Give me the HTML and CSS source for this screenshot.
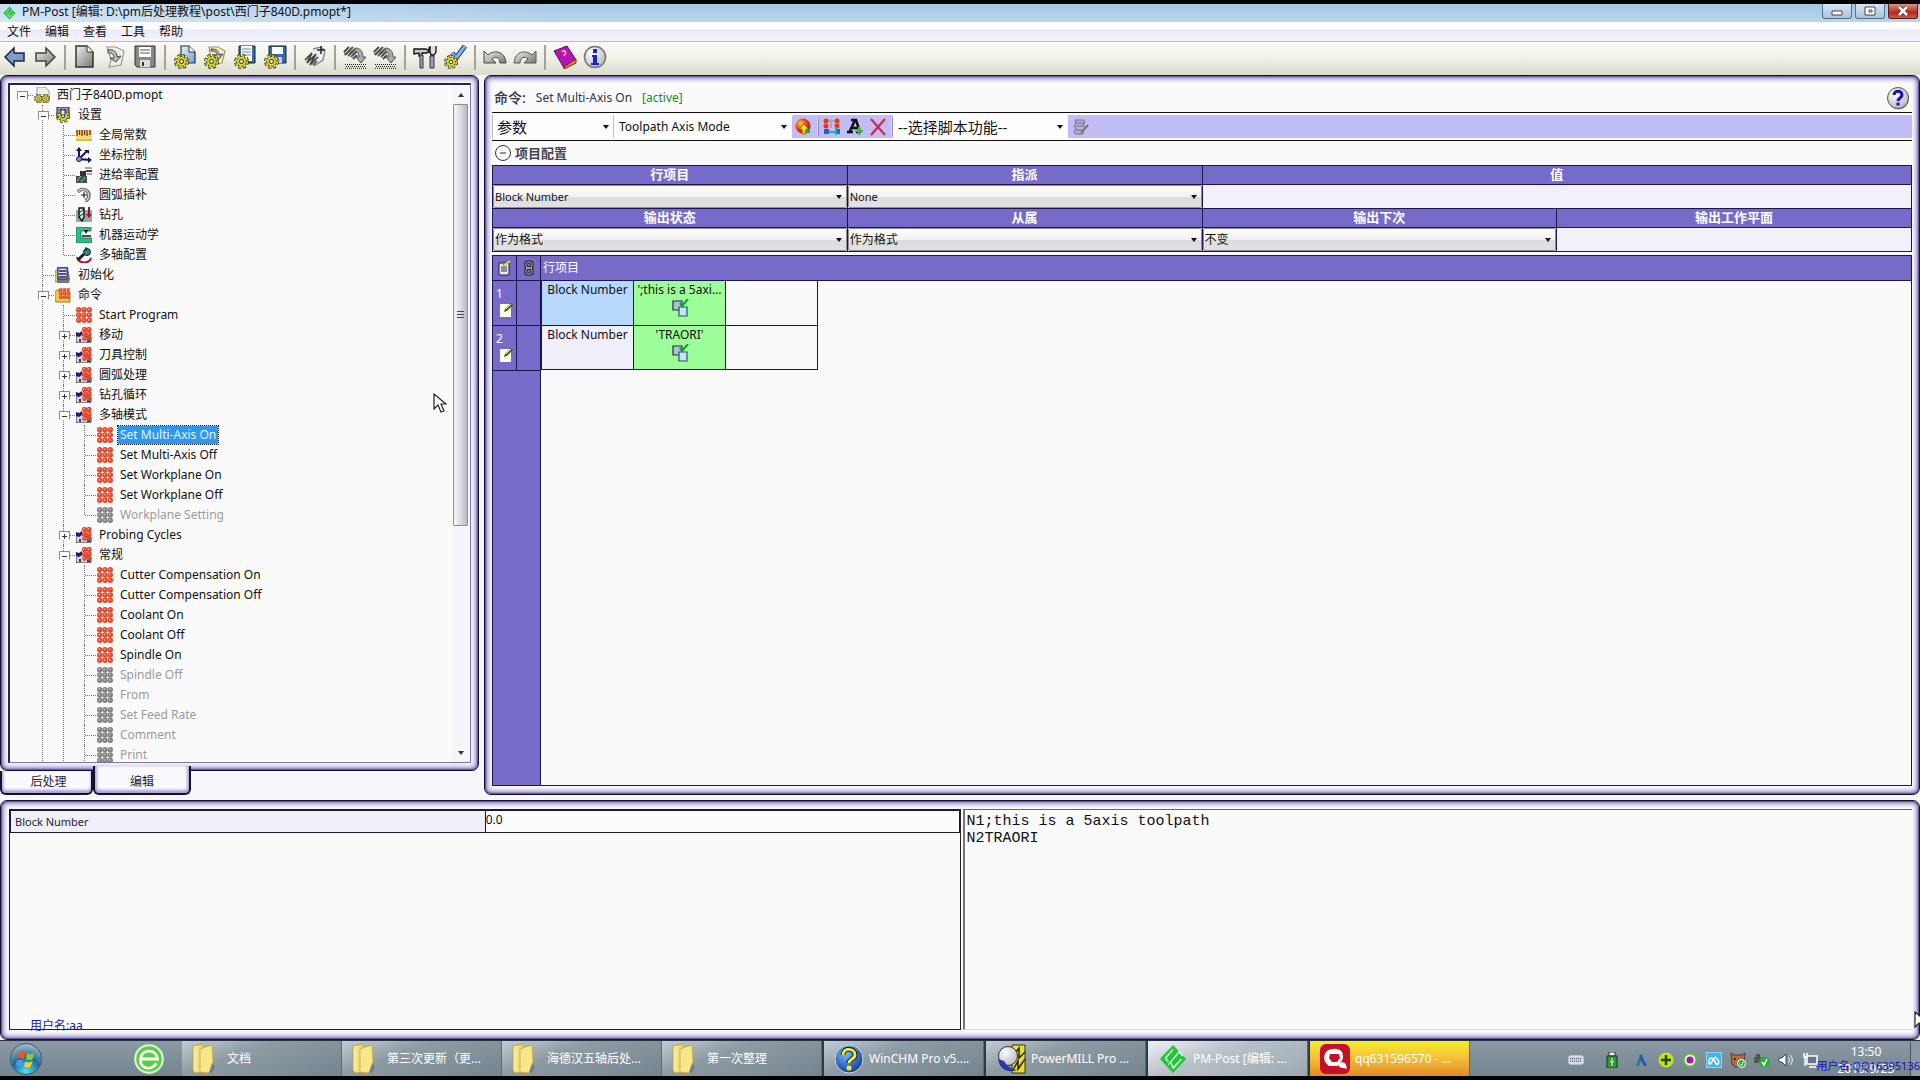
FILE: index.html
```html
<!DOCTYPE html>
<html lang="zh-CN">
<head>
    <meta charset="UTF-8">
    <meta name="viewport" content="width=device-width, initial-scale=1.0">
    <title>PM-Post</title>
    <link rel="stylesheet" href="styles.css">
</head>
<body>
    <!-- shared icons -->
    <svg class="sprite" aria-hidden="true">
        <defs>
            <linearGradient id="gGrey" x1="0" y1="0" x2="1" y2="1"><stop offset="0" stop-color="#f0f0f0"/><stop offset="1" stop-color="#777"/></linearGradient>
            <linearGradient id="gBlue" x1="0" y1="0" x2="1" y2="1"><stop offset="0" stop-color="#e8f4ff"/><stop offset="1" stop-color="#6d9cd0"/></linearGradient>
            <linearGradient id="gFolder" x1="0" y1="0" x2="1" y2="0"><stop offset="0" stop-color="#fdf3a0"/><stop offset="1" stop-color="#dcc458"/></linearGradient>
            <radialGradient id="gOrb" cx=".5" cy=".9" r=".9"><stop offset="0" stop-color="#4fe0f0"/><stop offset=".5" stop-color="#1c6a9c"/><stop offset="1" stop-color="#a8c0d0"/></radialGradient>
            <radialGradient id="gRed" cx=".35" cy=".35" r=".7"><stop offset="0" stop-color="#ffd040"/><stop offset=".5" stop-color="#f04818"/><stop offset="1" stop-color="#b01008"/></radialGradient>
            <radialGradient id="gBall" cx=".35" cy=".3" r=".8"><stop offset="0" stop-color="#fff"/><stop offset="1" stop-color="#b4b4bc"/></radialGradient>
            <radialGradient id="gHelp" cx=".4" cy=".3" r=".8"><stop offset="0" stop-color="#6fc0ff"/><stop offset="1" stop-color="#0a2c90"/></radialGradient>
        </defs>
        <symbol id="gear" viewBox="0 0 14 14">
            <circle cx="7" cy="7" r="5.4" fill="none" stroke="#333508" stroke-width="3.2" stroke-dasharray="2.6 1.64"/>
            <circle cx="7" cy="7" r="5" fill="#333508"/>
            <circle cx="7" cy="7" r="5.2" fill="none" stroke="#d9d33c" stroke-width="2" stroke-dasharray="2 2.08"/>
            <circle cx="7" cy="7" r="4.2" fill="#d9d33c"/>
            <circle cx="7" cy="7" r="1.8" fill="#fff" stroke="#333508"/>
        </symbol>
        <symbol id="balls" viewBox="0 0 16 16">
            <g fill="currentColor"><circle cx="2.7" cy="2.7" r="2.7"/><circle cx="8" cy="2.7" r="2.7"/><circle cx="13.3" cy="2.7" r="2.7"/><circle cx="2.7" cy="8" r="2.7"/><circle cx="8" cy="8" r="2.7"/><circle cx="13.3" cy="8" r="2.7"/><circle cx="2.7" cy="13.3" r="2.7"/><circle cx="8" cy="13.3" r="2.7"/><circle cx="13.3" cy="13.3" r="2.7"/></g>
            <g fill="#fff" fill-opacity=".45"><circle cx="2.3" cy="2.3" r="1"/><circle cx="7.6" cy="2.3" r="1"/><circle cx="12.9" cy="2.3" r="1"/><circle cx="2.3" cy="7.6" r="1"/><circle cx="7.6" cy="7.6" r="1"/><circle cx="12.9" cy="7.6" r="1"/><circle cx="2.3" cy="12.9" r="1"/><circle cx="7.6" cy="12.9" r="1"/><circle cx="12.9" cy="12.9" r="1"/></g>
        </symbol>
        <symbol id="group" viewBox="0 0 16 16">
            <path d="M0 7h6l3 2 6 1v5l-2 1H1l-1-1z" fill="#d4d4e0" stroke="#333" stroke-width="1"/>
            <path d="M0 5l3 1 3-2v4L3 10 0 9z" fill="#1c1c70"/>
            <path d="M3 12h2v3H3zM11 13h3v2h-3z" fill="#444"/>
            <g fill="#e2472c"><circle cx="8.5" cy="2.5" r="2.6"/><circle cx="13" cy="2.5" r="2.6"/><circle cx="8.5" cy="7" r="2.6"/><circle cx="13" cy="7" r="2.6"/><circle cx="8.5" cy="11.5" r="2.4"/><circle cx="13" cy="11" r="2.4"/></g>
            <g fill="#ffb6a0"><circle cx="8" cy="2" r=".8"/><circle cx="12.5" cy="2" r=".8"/><circle cx="8" cy="6.5" r=".8"/><circle cx="12.5" cy="6.5" r=".8"/><circle cx="8" cy="11" r=".8"/></g>
        </symbol>
        <symbol id="folder" viewBox="0 0 24 32">
            <path d="M1 3l9-2 3 3v25l-9 1-3-2z" fill="url(#gFolder)" stroke="#b59b3a" stroke-width=".8"/>
            <path d="M8 6l12-4 1 17-4 11-9-1z" fill="#f7e78a" stroke="#c5aa45" stroke-width=".8"/>
            <path d="M17 30c4-1 6-3 6-6l-3-4z" fill="#57646d" opacity=".5"/>
        </symbol>
        <symbol id="edit" viewBox="0 0 14 16">
            <path d="M1 2h11v13H1z" fill="#fdfde8"/>
            <path d="M5 10l1-3 6-6 2 2-6 6z" fill="#54552a"/><path d="M7 7l5-5" stroke="#e8e890"/>
        </symbol>
        <symbol id="linked" viewBox="0 0 18 18">
            <path d="M2 2h9v9H2z" fill="#a8c4dc" stroke="#234" stroke-width="1.2"/>
            <path d="M8 8h8v9H8z" fill="#c8e4f4" stroke="#257" stroke-width="1.2"/>
            <path d="M9 4l2 3 6-7" fill="none" stroke="#169c26" stroke-width="2"/>
        </symbol>
        <symbol id="spring" viewBox="0 0 24 24">
            <path d="M1 7l5-5M2 10l8-8M5 11l7-7M8 12l6-6M10 14l4-4" fill="none" stroke="#444" stroke-width="1.8"/>
            <path d="M1 7l1 3M10 2l-5 9M12 4l-4 8" fill="none" stroke="#777"/>
            <path d="M12 3c5 0 8 3 8 9h3l-5 6-5-6h3c0-3-1-5-4-6z" fill="#aaa" stroke="#555"/>
            <path d="M2 19.500h21M3 21.500h20M2 23.300h21" stroke="#222" stroke-width="1" stroke-dasharray="1 1"/>
        </symbol>
        <symbol id="pmpost" viewBox="0 0 32 32">
            <path d="M16 1l14 15-14 15L2 16z" fill="#22c43c"/>
            <path d="M8 15l8-9M11 22l12-14M16 26l9-10M8 15l3 4M23 8l3 5M14 20l2 6" stroke="#dcf6de" stroke-width="1.6" fill="none"/>
        </symbol>
    </svg>

    <header class="titlebar">
        <svg class="app-icon"><use href="#pmpost"/></svg>
        <h1 class="title">PM-Post [编辑: D:\pm后处理教程\post\西门子840D.pmopt*]</h1>
        <div class="window-buttons">
            <button type="button" class="win-btn" aria-label="最小化"><svg viewBox="0 0 14 12"><path d="M2 6h10v4H2z" fill="#fff" stroke="#445" /></svg></button>
            <button type="button" class="win-btn" aria-label="最大化"><svg viewBox="0 0 14 12"><path d="M2 2h10v8H2zM6 5h3v2H6z" fill="#fff" stroke="#445"/></svg></button>
            <button type="button" class="win-btn win-close" aria-label="关闭"><svg viewBox="0 0 14 12"><path d="M3 2l8 8M11 2l-8 8" stroke="#533" stroke-width="4"/><path d="M3 2l8 8M11 2l-8 8" stroke="#fff" stroke-width="2.500"/></svg></button>
        </div>
    </header>

    <nav class="menubar">
        <button type="button">文件</button>
        <button type="button">编辑</button>
        <button type="button">查看</button>
        <button type="button">工具</button>
        <button type="button">帮助</button>
    </nav>

    <div class="toolbar" role="toolbar">
        <button type="button" aria-label="后退"><svg viewBox="0 0 24 24"><path d="M2 12l9-9v5h10v8H11v5z" fill="#7f9cc8" stroke="#1b2748" stroke-width="1.500"/></svg></button>
        <button type="button" aria-label="前进"><svg viewBox="0 0 24 24"><path d="M22 12l-9-9v5H3v8h10v5z" fill="url(#gGrey)" stroke="#444" stroke-width="1.500"/></svg></button>
        <span class="sep"></span>
        <button type="button" aria-label="新建"><svg viewBox="0 0 24 24"><path d="M3 1h11l6 6v15H3z" fill="url(#gGrey)" stroke="#333" stroke-width="1.500"/><path d="M14 1v6h6" fill="#fff" stroke="#333"/></svg></button>
        <button type="button" aria-label="打开"><svg viewBox="0 0 24 24"><path d="M4 2h9l8 4-3 14-12 2 2-7z" fill="#eee" stroke="#999" stroke-width="1.200"/><path d="M5 5c6-1 9 2 9 7l4-1-5 6-6-4h4c0-4-2-5-6-5z" fill="#bbb" stroke="#444"/></svg></button>
        <button type="button" aria-label="保存"><svg viewBox="0 0 24 24"><path d="M2 1h20v21H4l-2-2z" fill="#888" stroke="#333"/><path d="M6 2h12v10H6z" fill="#fff"/><path d="M7 5h10M7 8h10" stroke="#555"/><path d="M7 15h10v7H7z" fill="#ddd"/><path d="M9 17h2v4H9z" fill="#333"/></svg></button>
        <span class="sep"></span>
        <button type="button" aria-label="新建配置"><svg viewBox="0 0 24 24"><path d="M8 1h8l6 6v11H8z" fill="url(#gBlue)" stroke="#234" stroke-width="1.200"/><path d="M16 1v6h6" fill="#fff" stroke="#234"/><use href="#gear" x="1" y="9" width="15" height="15"/></svg></button>
        <button type="button" aria-label="打开配置"><svg viewBox="0 0 24 24"><path d="M6 2h9l7 4-3 12-10 1z" fill="#f3f0b0" stroke="#998" stroke-width="1.200"/><path d="M8 4c6 0 8 2 8 6l4-1-5 6-5-5h4c0-3-2-4-6-4z" fill="#bbb" stroke="#444"/><use href="#gear" x="1" y="9" width="15" height="15"/></svg></button>
        <button type="button" aria-label="保存文本"><svg viewBox="0 0 24 24"><path d="M6 1h16v17H6z" fill="#3f6f8e" stroke="#123"/><path d="M8 1h11v15H8z" fill="#fff"/><path d="M9 4h9M9 7h9M9 10h9" stroke="#68a"/><use href="#gear" x="1" y="9" width="15" height="15"/></svg></button>
        <button type="button" aria-label="保存配置"><svg viewBox="0 0 24 24"><path d="M6 1h17v17H6z" fill="#3a68a8" stroke="#123"/><path d="M9 2h11v7H9z" fill="#fff"/><path d="M11 12h8v6h-8z" fill="#ccd"/><use href="#gear" x="1" y="9" width="15" height="15"/></svg></button>
        <span class="sep"></span>
        <button type="button" aria-label="添加脚本"><svg viewBox="0 0 24 24"><path d="M10 4l8-2 4 4-2 9-9 6" fill="#eee" stroke="#888" stroke-width="1.4"/><path d="M2 15l7-7M4 18l9-9M7 20l8-8M9 8l-5 10M13 9l-6 11M10 20l4-4" fill="none" stroke="#444" stroke-width="1.7"/><path d="M18 1v8M14 5h8" stroke="#222" stroke-width="1.500"/></svg></button>
        <span class="sep"></span>
        <button type="button" aria-label="编译"><svg><use href="#spring"/></svg></button>
        <button type="button" aria-label="调试"><svg><use href="#spring"/></svg></button>
        <span class="sep"></span>
        <button type="button" aria-label="选项"><svg viewBox="0 0 24 24"><path d="M1 4h12l3 2V3h3v4h-3l-3 1H9v3H6V8L1 9z" fill="#ccc" stroke="#111" stroke-width="1.400"/><path d="M7 10h3v13H7zM17 11h4v12h-4z" fill="#9aa2b4" stroke="#334"/><path d="M17 1v6l1 3h3l2-3V1" fill="#ddd" stroke="#111" stroke-width="1.300"/></svg></button>
        <button type="button" aria-label="校验"><svg viewBox="0 0 24 24"><path d="M9 8l4 5L22 1" fill="none" stroke="#235" stroke-width="5"/><path d="M9 8l4 5L22 1" fill="none" stroke="#79b6ee" stroke-width="3"/><use href="#gear" x="1" y="10" width="14" height="14"/></svg></button>
        <span class="sep"></span>
        <button type="button" aria-label="撤销"><svg viewBox="0 0 24 24"><path d="M1 6l4 4c5-5 17-5 18 8h-6c0-6-5-7-8-4l4 4H1z" fill="url(#gGrey)" stroke="#444"/></svg></button>
        <button type="button" aria-label="重做"><svg viewBox="0 0 24 24"><path d="M23 6l-4 4C14 5 2 5 1 18h6c0-6 5-7 8-4l-4 4h12z" fill="url(#gGrey)" stroke="#555"/></svg></button>
        <span class="sep"></span>
        <button type="button" aria-label="帮助"><svg viewBox="0 0 24 24"><path d="M1 6l13-5 9 14-12 8z" fill="#b515b8" stroke="#5c0a66"/><path d="M11 22l12-8v4l-12 6z" fill="#f08a28" stroke="#622"/><path d="M9 7c2-3 5 0 3 2l-1 2" fill="none" stroke="#fb9" stroke-width="1.500"/></svg></button>
        <button type="button" aria-label="关于"><svg viewBox="0 0 24 24"><circle cx="12" cy="12" r="10.500" fill="url(#gBall)" stroke="#777" stroke-width="1.500"/><path d="M10 4h4v4h-4zM9 10h5v8h2v2H8v-2h2v-6H9z" fill="#1a22d0"/></svg></button>
    </div>

    <main class="workspace">
        <section class="sidebar">
            <div class="panel tree-panel">
                <div class="tree-box">
                    <ul class="tree">
                        <li class="root">
                            <div class="row"><span class="twig open"></span><svg viewBox="0 0 16 16"><path d="M3 0h8l4 4v11H3z" fill="#eee" stroke="#999"/><use href="#gear" x="0" y="7" width="9" height="9"/><use href="#gear" x="7" y="7" width="9" height="9"/></svg><span class="label">西门子840D.pmopt</span></div>
                            <ul>
                                <li>
                                    <div class="row"><span class="twig open"></span><svg viewBox="0 0 16 16"><path d="M2 0h12v11H2z" fill="#99b" stroke="#223"/><use href="#gear" x="1" y="2" width="14" height="14"/><path d="M6 3h4v5H6z" fill="#eef" stroke="#335"/></svg><span class="label">设置</span></div>
                                    <ul>
                                        <li><div class="row"><span class="twig"></span><svg viewBox="0 0 16 16"><path d="M0 3h16v11H0z" fill="#f3dd76"/><path d="M1 3v6M3.500 3v5M6 3v6M8.500 3v5M11 3v6M14 3v5" stroke="#7c2a12" stroke-width="1.300"/><path d="M0 13h16" stroke="#b79b2c"/></svg><span class="label">全局常数</span></div></li>
                                        <li><div class="row"><span class="twig"></span><svg viewBox="0 0 16 16"><path d="M3 1v11l11 1M3 12l8-8" fill="none" stroke="#15155f" stroke-width="2"/><path d="M0 4l3-4 3 4zM12 10l4 3-4 3zM8 3h5v4z" fill="#15155f"/><circle cx="3" cy="12" r="2.500" fill="#8899d0" stroke="#15155f"/></svg><span class="label">坐标控制</span></div></li>
                                        <li><div class="row"><span class="twig"></span><svg viewBox="0 0 16 16"><path d="M4 4h6v6H4z" fill="#333"/><path d="M0 9h11v7H0z" fill="#3f5650"/><path d="M1 14l4-5M5 15l4-5" stroke="#9bb"/><path d="M9 1h7M11 7h5" stroke="#6b9c92" stroke-width="1.500"/><path d="M10 4h6" stroke="#a01c3c" stroke-width="2"/></svg><span class="label">进给率配置</span></div></li>
                                        <li><div class="row"><span class="twig"></span><svg viewBox="0 0 16 16"><path d="M2 5a6 6 0 1 1 7 9" fill="none" stroke="#555" stroke-width="3.400"/><path d="M2 5a6 6 0 1 1 7 9" fill="none" stroke="#ccc" stroke-width="1.600"/><path d="M8 5v6M5 8h6" stroke="#111"/></svg><span class="label">圆弧插补</span></div></li>
                                        <li><div class="row"><span class="twig"></span><svg viewBox="0 0 16 16"><path d="M0 3h16v12H0z" fill="#93aaa8"/><path d="M3 1h5v9l-2 4-3-4z" fill="#d8f0ee" stroke="#111" stroke-width="1.400"/><path d="M3 6l5-4M3 10l5-4" stroke="#111"/><path d="M13 0v8" stroke="#a01030" stroke-width="2"/><path d="M10 7h6l-3 4z" fill="#a01030"/></svg><span class="label">钻孔</span></div></li>
                                        <li><div class="row"><span class="twig"></span><svg viewBox="0 0 16 16"><path d="M0 0h15v4H5v7h11v5H0z" fill="#2fbd83" stroke="#12724a" stroke-width=".8"/><path d="M8 3h4l-2 4z" fill="#111"/><path d="M6 9h9" stroke="#111" stroke-width="1.500"/></svg><span class="label">机器运动学</span></div></li>
                                        <li><div class="row"><span class="twig"></span><svg viewBox="0 0 16 16"><path d="M1 10c1 7 13 7 14 1" fill="none" stroke="#a01838" stroke-width="2"/><path d="M2 13l6-6" stroke="#222" stroke-width="3"/><circle cx="11" cy="5" r="3.500" fill="#2f8a86" stroke="#123"/><path d="M10 0v4" stroke="#111"/></svg><span class="label">多轴配置</span></div></li>
                                    </ul>
                                </li>
                                <li><div class="row"><span class="twig"></span><svg viewBox="0 0 16 16"><path d="M0 4l3-2v12l-3 1z" fill="#e4d36a" stroke="#887"/><path d="M2 0h11l2 12-1 4H2z" fill="#777"/><path d="M3 1h9v11H3z" fill="#dfe4f8" stroke="#1d2463"/><path d="M4 4h7M4 7h7M4 10h7" stroke="#1d2463" stroke-width="1.500"/></svg><span class="label">初始化</span></div></li>
                                <li class="more">
                                    <div class="row"><span class="twig open"></span><svg viewBox="0 0 16 16"><path d="M0 5l4-3v3h11v10H1l-1-1z" fill="#f0c850" stroke="#a07c20"/><use class="cmd" href="#balls" x="4" y="0" width="11" height="13"/></svg><span class="label">命令</span></div>
                                    <ul>
                                        <li><div class="row"><span class="twig"></span><svg class="cmd"><use href="#balls"/></svg><span class="label">Start Program</span></div></li>
                                        <li><div class="row"><span class="twig closed"></span><svg><use href="#group"/></svg><span class="label">移动</span></div></li>
                                        <li><div class="row"><span class="twig closed"></span><svg><use href="#group"/></svg><span class="label">刀具控制</span></div></li>
                                        <li><div class="row"><span class="twig closed"></span><svg><use href="#group"/></svg><span class="label">圆弧处理</span></div></li>
                                        <li><div class="row"><span class="twig closed"></span><svg><use href="#group"/></svg><span class="label">钻孔循环</span></div></li>
                                        <li>
                                            <div class="row"><span class="twig open"></span><svg><use href="#group"/></svg><span class="label">多轴模式</span></div>
                                            <ul>
                                                <li><div class="row"><span class="twig"></span><svg class="cmd"><use href="#balls"/></svg><span class="label selected">Set Multi-Axis On</span></div></li>
                                                <li><div class="row"><span class="twig"></span><svg class="cmd"><use href="#balls"/></svg><span class="label">Set Multi-Axis Off</span></div></li>
                                                <li><div class="row"><span class="twig"></span><svg class="cmd"><use href="#balls"/></svg><span class="label">Set Workplane On</span></div></li>
                                                <li><div class="row"><span class="twig"></span><svg class="cmd"><use href="#balls"/></svg><span class="label">Set Workplane Off</span></div></li>
                                                <li class="off"><div class="row"><span class="twig"></span><svg class="cmd"><use href="#balls"/></svg><span class="label">Workplane Setting</span></div></li>
                                            </ul>
                                        </li>
                                        <li><div class="row"><span class="twig closed"></span><svg><use href="#group"/></svg><span class="label">Probing Cycles</span></div></li>
                                        <li class="more">
                                            <div class="row"><span class="twig open"></span><svg><use href="#group"/></svg><span class="label">常规</span></div>
                                            <ul>
                                                <li><div class="row"><span class="twig"></span><svg class="cmd"><use href="#balls"/></svg><span class="label">Cutter Compensation On</span></div></li>
                                                <li><div class="row"><span class="twig"></span><svg class="cmd"><use href="#balls"/></svg><span class="label">Cutter Compensation Off</span></div></li>
                                                <li><div class="row"><span class="twig"></span><svg class="cmd"><use href="#balls"/></svg><span class="label">Coolant On</span></div></li>
                                                <li><div class="row"><span class="twig"></span><svg class="cmd"><use href="#balls"/></svg><span class="label">Coolant Off</span></div></li>
                                                <li><div class="row"><span class="twig"></span><svg class="cmd"><use href="#balls"/></svg><span class="label">Spindle On</span></div></li>
                                                <li class="off"><div class="row"><span class="twig"></span><svg class="cmd"><use href="#balls"/></svg><span class="label">Spindle Off</span></div></li>
                                                <li class="off"><div class="row"><span class="twig"></span><svg class="cmd"><use href="#balls"/></svg><span class="label">From</span></div></li>
                                                <li class="off"><div class="row"><span class="twig"></span><svg class="cmd"><use href="#balls"/></svg><span class="label">Set Feed Rate</span></div></li>
                                                <li class="off"><div class="row"><span class="twig"></span><svg class="cmd"><use href="#balls"/></svg><span class="label">Comment</span></div></li>
                                                <li class="off more"><div class="row"><span class="twig"></span><svg class="cmd"><use href="#balls"/></svg><span class="label">Print</span></div></li>
                                            </ul>
                                        </li>
                                    </ul>
                                </li>
                            </ul>
                        </li>
                    </ul>
                    <div class="scrollbar">
                        <span class="arrow up"></span>
                        <div class="track"><div class="thumb"><span class="grip"></span></div></div>
                        <span class="arrow down"></span>
                    </div>
                </div>
            </div>
            <div class="tabs">
                <button type="button" class="tab">后处理</button>
                <button type="button" class="tab active">编辑</button>
            </div>
        </section>

        <section class="panel editor">
            <div class="command-head">
                <b>命令:</b><span>Set Multi-Axis On</span><span class="state">[active]</span>
                <button type="button" class="help" aria-label="帮助"><svg viewBox="0 0 24 24"><circle cx="12.500" cy="13" r="10.500" fill="#999"/><circle cx="12" cy="12" r="10.500" fill="url(#gBall)" stroke="#555"/><path d="M8 9c0-5 8-5 8 0 0 3-4 3-4 6" fill="none" stroke="#1414b0" stroke-width="3"/><path d="M10.500 16.500h3v3h-3z" fill="#1414b0"/></svg></button>
            </div>
            <div class="command-bar">
                <div class="pick pick-type"><select aria-label="类型"><option>参数</option></select></div>
                <div class="pick pick-param"><select class="latin" aria-label="参数"><option>Toolpath Axis Mode</option></select></div>
                <div class="bar-tools">
                    <button type="button" aria-label="添加参数"><svg viewBox="0 0 18 18"><circle cx="8" cy="8" r="7.500" fill="url(#gRed)"/><path d="M9 6l5 5h-3v5H7v-5H4z" fill="#f8e000" stroke="#a84010" stroke-width=".8"/><path d="M10 12h5v3h-5z" fill="#28a828"/></svg></button>
                    <span class="bar-sep"></span>
                    <button type="button" aria-label="添加行"><svg viewBox="0 0 18 18"><g fill="#dc3c20"><circle cx="3" cy="3" r="2.500"/><circle cx="3" cy="8" r="2.500"/><circle cx="14" cy="3" r="2.500"/><circle cx="14" cy="8" r="2.500"/></g><path d="M6 3h5M8 1v9" stroke="#b8a4a0" stroke-width="2"/><path d="M1 11h5v5H1zM12 11h5v5h-5z" fill="#2c60b4"/><path d="M6 14h8M13 9v8" stroke="#22b0b0" stroke-width="2"/></svg></button>
                    <button type="button" aria-label="添加文本"><svg viewBox="0 0 18 18"><path d="M5 2h5l4 12M9 2L4 13M1 14h6M10 14h5M6 10h6" fill="none" stroke="#101018" stroke-width="2.600"/><path d="M13 9v8M9 13h8" stroke="#3cc23c" stroke-width="2"/></svg></button>
                    <button type="button" aria-label="删除"><svg viewBox="0 0 18 18"><path d="M2 1l14 16M16 1L2 17" stroke="#cc2848" stroke-width="2.200"/></svg></button>
                    <span class="bar-sep"></span>
                </div>
                <div class="pick pick-script"><select aria-label="脚本功能"><option>--选择脚本功能--</option></select></div>
                <div class="bar-rest">
                    <button type="button" aria-label="编辑脚本"><svg viewBox="0 0 18 18"><path d="M4 2h9l1 3-2 2 2 3-2 3v3H5l-2-2 2-3-2-3 2-2z" fill="#b4b0d0" stroke="#77738c"/><path d="M5 5h8M5 8h7M4 12h8" stroke="#77738c"/><path d="M10 15l7-8" stroke="#777" stroke-width="2"/></svg></button>
                </div>
            </div>
            <h2 class="config-title"><svg viewBox="0 0 18 18"><circle cx="9" cy="9" r="7.500" fill="none" stroke="#334"/><path d="M6 9h6" stroke="#334"/></svg>项目配置</h2>
            <table class="config">
                <colgroup><col><col><col><col></colgroup>
                <tr><th>行项目</th><th>指派</th><th colspan="2">值</th></tr>
                <tr>
                    <td><div class="pick"><select class="small" aria-label="行项目"><option>Block Number</option></select></div></td>
                    <td><div class="pick"><select class="small" aria-label="指派"><option>None</option></select></div></td>
                    <td colspan="2"></td>
                </tr>
                <tr><th>输出状态</th><th>从属</th><th>输出下次</th><th>输出工作平面</th></tr>
                <tr>
                    <td><div class="pick"><select aria-label="输出状态"><option>作为格式</option></select></div></td>
                    <td><div class="pick"><select aria-label="从属"><option>作为格式</option></select></div></td>
                    <td><div class="pick"><select aria-label="输出下次"><option>不变</option></select></div></td>
                    <td></td>
                </tr>
            </table>
            <div class="blocks">
                <div class="blocks-head">
                    <span class="gutter"><svg viewBox="0 0 14 16"><path d="M1 3h10v12H1z" fill="#e8e8e0" stroke="#223"/><path d="M3 7h6M3 9h6M3 11h6" stroke="#335"/><path d="M5 6l7-5" stroke="#e8d838" stroke-width="2"/><path d="M2 1l4 4" stroke="#c33"/></svg></span>
                    <span class="gutter"><svg viewBox="0 0 14 16"><rect x="4" y="2" width="6" height="6" rx="2" fill="none" stroke="#111" stroke-width="3"/><rect x="4" y="8" width="6" height="6" rx="2" fill="none" stroke="#111" stroke-width="3"/><rect x="4" y="2" width="6" height="6" rx="2" fill="none" stroke="#ccc"/><rect x="4" y="8" width="6" height="6" rx="2" fill="none" stroke="#ccc"/></svg></span>
                    <span class="blocks-title">行项目</span>
                </div>
                <div class="blocks-body">
                    <div class="gutters">
                        <div class="gutter-row"><span>1<svg><use href="#edit"/></svg></span><span></span></div>
                        <div class="gutter-row"><span>2<svg><use href="#edit"/></svg></span><span></span></div>
                    </div>
                    <table class="cells">
                        <tr><td class="current">Block Number</td><td class="code">';this is a 5axi...<svg><use href="#linked"/></svg></td><td></td></tr>
                        <tr><td class="field">Block Number</td><td class="code">'TRAORI'<svg><use href="#linked"/></svg></td><td></td></tr>
                    </table>
                </div>
            </div>
        </section>

        <svg class="cursor cursor-tree" viewBox="0 0 14 20"><path d="M1 1v15l4-4 3 7 3-1-3-7h5z" fill="#fff" stroke="#222" stroke-width="1.200"/></svg>
    </main>

    <section class="panel output">
        <div class="values">
            <div class="value-row"><label for="block-number">Block Number</label><input type="text" id="block-number" value="0.0"></div>
            <span class="user-mark">用户名:aa</span>
        </div>
        <textarea class="preview" aria-label="输出" readonly>N1;this is a 5axis toolpath
N2TRAORI</textarea>
    </section>

    <footer class="taskbar">
        <div class="launch">
            <button type="button" aria-label="开始"><svg viewBox="0 0 36 36"><circle cx="18" cy="18" r="16.500" fill="url(#gOrb)" stroke="#456"/><path d="M10 11c3-2 5-1 7 0l-1 7c-2-1-5-2-8 0z" fill="#ee5524"/><path d="M19 12c3 1 5 1 8-1l-2 7c-2 2-5 1-7 0z" fill="#88cc33"/><path d="M8 20c3-2 5-1 7 0l-1 6c-2-1-5-2-7 0z" fill="#3f9ce8"/><path d="M17 21c3 1 5 1 8-1l-2 6c-2 2-5 1-7 0z" fill="#fccb24"/></svg></button>
            <button type="button" aria-label="浏览器"><svg viewBox="0 0 32 32"><circle cx="16" cy="16" r="13" fill="#58cf3c" stroke="#d8f6cc" stroke-width="2"/><path d="M8 16h16c-1-10-15-10-16 0s11 11 15 4" fill="none" stroke="#fff" stroke-width="2.600"/></svg></button>
        </div>
        <button type="button" class="task"><svg><use href="#folder"/></svg><span>文档</span></button>
        <button type="button" class="task"><svg><use href="#folder"/></svg><span>第三次更新（更...</span></button>
        <button type="button" class="task"><svg><use href="#folder"/></svg><span>海德汉五轴后处...</span></button>
        <button type="button" class="task"><svg><use href="#folder"/></svg><span>第一次整理</span></button>
        <button type="button" class="task lit"><svg viewBox="0 0 30 30"><circle cx="15" cy="15" r="14" fill="url(#gHelp)" stroke="#cde"/><path d="M9 11c0-8 12-7 12 0 0 4-6 4-6 8" fill="none" stroke="#111" stroke-width="5"/><path d="M9 11c0-8 12-7 12 0 0 4-6 4-6 8" fill="none" stroke="#f4ec30" stroke-width="3"/><circle cx="15" cy="24" r="2.500" fill="#f4ec30"/></svg><span>WinCHM Pro v5....</span></button>
        <button type="button" class="task lit"><svg viewBox="0 0 30 30"><path d="M16 1h13v28H16z" fill="#e8e020" stroke="#333"/><path d="M17 12l6-8v10l6-6M17 26l5-9v8l7-10" stroke="#222" stroke-width="1.500" fill="none"/><circle cx="12" cy="12" r="9.500" fill="url(#gBall)" stroke="#333"/><path d="M2 15c2 12 12 14 19 11-8-1-11-6-13-9z" fill="#2838a8"/></svg><span>PowerMILL Pro ...</span></button>
        <button type="button" class="task bright"><svg><use href="#pmpost"/></svg><span>PM-Post [编辑: ...</span></button>
        <button type="button" class="task alert"><svg viewBox="0 0 30 30"><rect width="30" height="30" rx="6" fill="#c4102a"/><path d="M7 7c5-3 12-3 15 1 2 5 1 8-2 11l-2 3H9l-3-3c-3-4-2-9 1-12z" fill="#fff"/><path d="M10 10h9l1 4-3 4h-5l-3-4z" fill="#c4102a"/><path d="M19 20c1-3 7-2 7 1l1 4-3-1c-3 0-6-1-5-4z" fill="#fff"/></svg><span>qq631596570 - ...</span></button>
        <div class="tray">
            <svg class="keyboard" viewBox="0 0 16 16"><rect x="1" y="4" width="14" height="8" rx="1" fill="#c8d0d8" stroke="#eef"/><path d="M2 6.500h12M2 9h12" stroke="#556" stroke-dasharray="1 1"/></svg>
            <svg class="usb" viewBox="0 0 16 16"><path d="M5 0h6v4H5z" fill="#eee" stroke="#333"/><path d="M3 4h10v12H3z" fill="#2f9c28" stroke="#134"/><path d="M8 6v8M6 9l2 2 2-2" stroke="#fff" fill="none"/></svg>
            <svg viewBox="0 0 16 16"><path d="M2 14L6 2l3 2-4 10z" fill="#2a7c98"/><path d="M7 2l6 12h-3L6 6z" fill="#2c50b8"/></svg>
            <svg viewBox="0 0 16 16"><circle cx="8" cy="8" r="7.500" fill="#c8e020"/><path d="M8 3v10M3 8h10" stroke="#154a10" stroke-width="2.500"/></svg>
            <svg viewBox="0 0 16 16"><circle cx="8" cy="8" r="7.500" fill="#5cb84c"/><circle cx="8" cy="8" r="5.500" fill="#eee"/><circle cx="8" cy="8" r="3.500" fill="#b0189c"/></svg>
            <svg viewBox="0 0 16 16"><path d="M0 0h16v16H0z" fill="#48b4e8" stroke="#cef"/><path d="M3 10c0-5 4-5 6 0s5 1 3-2-3-4-5 0-4 6-4 2z" fill="none" stroke="#fff" stroke-width="1.500"/></svg>
            <svg viewBox="0 0 16 16"><path d="M1 1l3 2h8l3-2-1 12-4 2H5l-3-3z" fill="#b06c3c" stroke="#633"/><circle cx="5" cy="7" r="1" fill="#111"/><circle cx="11.500" cy="11.500" r="4" fill="#2cae3c" stroke="#fff"/><path d="M9.500 11.500l2 2 2-4" fill="none" stroke="#fff"/></svg>
            <svg viewBox="0 0 16 16"><path d="M2 2h4v3h2v6H0V5h2z" fill="#555"/><circle cx="10.500" cy="10" r="5.500" fill="#2cae3c"/><path d="M8 10l2 3 3-6" fill="none" stroke="#fff" stroke-width="1.500"/></svg>
            <svg viewBox="0 0 16 16"><path d="M1 6h3l4-4v12l-4-4H1z" fill="#fff" stroke="#445"/><path d="M10 5c2 2 2 4 0 6M12 3c3 3 3 7 0 10" fill="none" stroke="#fff"/></svg>
            <svg viewBox="0 0 16 16"><path d="M5 4h10v8H5z" fill="#678" stroke="#fff" stroke-width="1.500"/><path d="M2 1v4h3V1M3 5v9M7 15h7" stroke="#fff" stroke-width="1.500" fill="none"/></svg>
            <div class="clock"><time>13:50</time><time>2016/9/23</time></div>
            <span class="show-desktop"></span>
        </div>
        <span class="user-mark">用户名:QQ16395136</span>
        <svg class="cursor cursor-edge" viewBox="0 0 14 20"><path d="M1 1v15l4-4 3 7 3-1-3-7h5z" fill="#fff" stroke="#222" stroke-width="1.200"/></svg>
    </footer>
</body>
</html>
```

FILE: styles.css
```css
* {
    box-sizing: border-box;
}

body {
    margin: 0;
    height: 100vh;
    display: flex;
    flex-direction: column;
    overflow: hidden;
    border-top: 4px solid #000;
    border-bottom: 4px solid #000;
    background: #f6f6fb;
    color: #111;
    font: 12px/16px "Noto Sans", "Noto Sans CJK SC", sans-serif;
}

button,
select,
input,
textarea {
    font: inherit;
    color: inherit;
    border: 0;
    padding: 0;
    margin: 0;
    background: none;
}

svg {
    display: block;
    flex: none;
}

.sprite {
    position: absolute;
    width: 0;
    height: 0;
}

/* title bar and menu */
.titlebar {
    display: flex;
    align-items: center;
    height: 18px;
    padding: 0 2px;
    background: linear-gradient(90deg, rgba(255, 255, 255, 0.4), rgba(255, 255, 255, 0) 30%), linear-gradient(#a6c6e4, #b9d5ee);
}

.app-icon {
    width: 15px;
    height: 14px;
}

.title {
    flex: 1;
    margin: 0 0 0 5px;
    padding-bottom: 3px;
    font-size: 12px;
    font-weight: normal;
    line-height: 15px;
}

.window-buttons {
    display: flex;
    align-self: flex-start;
    gap: 3px;
}

.win-btn {
    display: flex;
    align-items: center;
    justify-content: center;
    width: 30px;
    height: 15px;
    border: 1px solid #57718c;
    border-top: 0;
    border-radius: 0 0 3px 3px;
    background: linear-gradient(#d4e4f4, #a8c4de);
}

.win-btn svg {
    width: 14px;
    height: 12px;
}

.win-close {
    border-color: #571c1c;
    background: linear-gradient(#dc9388, #b8281c 60%, #cc5a48);
}

.menubar {
    display: flex;
    gap: 14px;
    height: 20px;
    padding: 0 7px;
    background: linear-gradient(#fdfdff 0, #fdfdff 7px, #e9ebf7 8px, #f3f3fc);
    border-bottom: 1px solid #b4bcc4;
}

.toolbar {
    display: flex;
    align-items: center;
    height: 33px;
    padding-bottom: 3px;
    background: linear-gradient(#fbfaf6, #f0f0e8 50%, #dbdcca);
}

.toolbar button {
    width: 30px;
    padding: 0 3px;
}

.toolbar svg {
    width: 24px;
    height: 24px;
}

.sep {
    width: 2px;
    height: 25px;
    margin: 0 4px;
    background: #a3a39c;
}

/* framed panels */
.panel {
    border: 1px solid #14102e;
    border-radius: 7px;
    background: #fafafa;
    box-shadow: inset 0 0 2px 1px #4c4280, inset 0 0 4px 3px #a99fd8, inset 0 0 4px 4px #e6e1f8;
}

.workspace {
    position: relative;
    flex: 1;
    min-height: 0;
    display: flex;
    gap: 4px;
}

.sidebar {
    flex: 0 0 25%;
    display: flex;
    flex-direction: column;
    min-height: 0;
    padding-right: 1px;
}

.tree-panel {
    flex: 1;
    min-height: 0;
    display: flex;
    padding: 7px;
}

.tree-box {
    flex: 1;
    display: flex;
    overflow: hidden;
    border: 1px solid #7d74a8;
    border-top: 2px solid #2c2740;
    border-left: 2px solid #2c2740;
    background: #fafafa;
}

.tree,
.tree ul {
    list-style: none;
    margin: 0;
    padding: 0;
}

.tree {
    flex: 1;
    padding-left: 4px;
}

.tree ul {
    margin-left: 21px;
}

.tree li {
    position: relative;
}

.tree li::before {
    content: "";
    position: absolute;
    top: 0;
    bottom: 0;
    left: 7px;
    border-left: 1px dotted #777;
}

.tree li:last-child::before {
    bottom: auto;
    height: 10px;
}

.tree li.more:last-child::before {
    bottom: 0;
    height: auto;
}

.tree li.root::before {
    display: none;
}

.row {
    display: flex;
    align-items: center;
    height: 20px;
}

.row svg {
    width: 16px;
    height: 16px;
}

.twig {
    position: relative;
    width: 20px;
    height: 9px;
    background: linear-gradient(90deg, #777 50%, transparent 50%) 8px 4px / 2px 1px repeat-x;
    clip-path: inset(0 1px 0 3px);
}

.twig:not(.open):not(.closed) {
    clip-path: inset(0 1px 0 7px);
}

.twig.open::before,
.twig.closed::before {
    content: "";
    position: absolute;
    left: 3px;
    top: 0;
    width: 9px;
    height: 9px;
    border: 1px solid #8a8a8a;
    background: linear-gradient(#333, #333) center / 5px 1px no-repeat #fff;
}

.twig.closed::before {
    background: linear-gradient(#333, #333) center / 5px 1px no-repeat, linear-gradient(#333, #333) center / 1px 5px no-repeat #fff;
}

.label {
    margin-left: 5px;
    padding: 0 2px;
    line-height: 18px;
    white-space: nowrap;
}

.selected {
    outline: 1px dotted #112;
    background: #2f97ec;
    color: #e4f6ff;
}

.cmd {
    color: #e0482a;
}

.off {
    color: #9b9b9b;
}

.off .cmd {
    color: #808080;
}

.scrollbar {
    display: flex;
    flex-direction: column;
    align-items: center;
    width: 15px;
    background: #f5f4f8;
    margin-right: 2px;
}

.arrow {
    height: 19px;
    padding-top: 8px;
}

.arrow::before {
    content: "";
    display: block;
    border: 3px solid transparent;
    border-top: 0;
    border-bottom: 4px solid #333;
}

.arrow.down::before {
    border-top: 4px solid #333;
    border-bottom: 0;
}

.track {
    flex: 1;
    width: 100%;
}

.thumb {
    display: flex;
    align-items: center;
    justify-content: center;
    height: 66%;
    border: 1px solid #8d8d93;
    border-radius: 1px;
    background: linear-gradient(90deg, #f6f6f8, #dcdce2 50%, #b9b9c0);
}

.grip {
    width: 7px;
    height: 8px;
    background: repeating-linear-gradient(#444 0, #444 1px, transparent 1px, transparent 3px);
}

.tabs {
    display: flex;
    height: 24px;
    margin-bottom: 3px;
}

.tab {
    width: 93px;
    padding-left: 4px;
    border: 2px solid #14102e;
    border-top: 0;
    border-radius: 0 0 6px 6px;
    background: #fafafc;
    box-shadow: inset 0 -3px 3px #a99fd6, inset 2px 0 2px #c9c2ea;
    color: #223;
}

.tab.active {
    position: relative;
    width: 98px;
    height: 29px;
    margin-top: -5px;
    padding: 5px 0 0;
    box-shadow: inset 0 -3px 3px #a99fd6, inset 3px 0 3px -1px #b5acdc, inset -3px 0 3px -1px #b5acdc;
}

/* command editor */
.editor {
    flex: 1;
    min-width: 0;
    display: flex;
    flex-direction: column;
    margin-bottom: 3px;
    padding: 7px 7px 8px;
}

.command-head {
    display: flex;
    align-items: center;
    gap: 10px;
    height: 30px;
    padding: 0 2px;
    border-bottom: 1px solid #111;
    color: #334;
}

.command-head b {
    font-size: 14px;
    font-weight: 500;
}

.state {
    color: #168a26;
}

.help {
    margin-left: auto;
}

.help svg {
    width: 24px;
    height: 24px;
}

.command-bar {
    display: flex;
    gap: 1px;
    height: 28px;
    padding: 2px 0;
    border-bottom: 1px solid #111;
}

.pick {
    position: relative;
    height: 100%;
    background: #fdfdfd;
}

.pick::after {
    content: "";
    position: absolute;
    top: 50%;
    right: 4px;
    margin-top: -2px;
    border: 3px solid transparent;
    border-top: 4px solid #111;
    border-bottom: 0;
    pointer-events: none;
}

.pick select {
    appearance: none;
    display: block;
    width: 100%;
    height: 100%;
    padding-left: 3px;
    border-radius: 0;
}

.command-bar select {
    padding-left: 4px;
    font-size: 15px;
}

.command-bar .latin {
    font-size: 12px;
}

.pick .small {
    font-size: 11px;
}

.pick-type {
    width: 122px;
    border-left: 1px solid #bbb;
    border-right: 1px solid #c3bdf5;
}

.pick-param {
    width: 176px;
}

.pick-script {
    width: 173px;
}

.bar-tools,
.bar-rest {
    display: flex;
    align-items: center;
    background: #c3bdf5;
}

.bar-tools {
    gap: 3px;
    padding-left: 2px;
}

.bar-rest {
    flex: 1;
    padding-left: 2px;
}

.bar-tools svg,
.bar-rest svg {
    width: 18px;
    height: 18px;
}

.bar-tools button,
.bar-rest button {
    padding: 0 1px;
}

.bar-sep {
    width: 2px;
    height: 18px;
    background: #dedaff;
    border-right: 1px solid #8f88b8;
}

.config-title {
    display: flex;
    align-items: center;
    gap: 3px;
    height: 24px;
    margin: 0;
    padding-left: 2px;
    color: #445;
    font-size: 13px;
    font-weight: bold;
}

.config-title svg {
    width: 18px;
    height: 18px;
}

.config {
    width: 100%;
    table-layout: fixed;
    border-collapse: collapse;
}

.config col {
    width: 25%;
}

.config th,
.config td {
    padding: 0;
    border: 1px solid #1b164e;
}

.config th {
    height: 19px;
    padding-bottom: 2px;
    background: #776bca;
    color: #fff;
    font-size: 13px;
    line-height: 16px;
}

.config td {
    height: 24px;
    background: #f2f1fa;
}

.config .pick {
    height: 23px;
    border: 1px solid #8d8d9a;
    border-radius: 2px;
    background: linear-gradient(#fdfdfd, #f1f1f1 50%, #dcdcdc 55%, #e2e2e2);
}

.config select {
    padding-left: 1px;
}

.blocks {
    flex: 1;
    min-height: 0;
    display: flex;
    flex-direction: column;
    margin-top: 3px;
    border: 1px solid #1b164e;
}

.blocks-head {
    display: flex;
    height: 25px;
    background: #776bca;
    border-bottom: 1px solid #1b164e;
    color: #fff;
}

.gutter {
    display: flex;
    align-items: center;
    justify-content: center;
    width: 24px;
    border-right: 1px solid #1b164e;
}

.gutter svg {
    width: 14px;
    height: 16px;
}

.blocks-title {
    padding-left: 2px;
    line-height: 23px;
}

.blocks-body {
    flex: 1;
    display: flex;
    align-items: flex-start;
}

.gutters {
    align-self: stretch;
    width: 48px;
    background: #776bca;
    border-right: 1px solid #1b164e;
}

.gutter-row {
    display: flex;
    height: 45px;
    border-bottom: 1px solid #1b164e;
    color: #fff;
}

.gutter-row span {
    flex: 1;
    padding: 5px 0 0 3px;
    line-height: 16px;
}

.gutter-row span + span {
    border-left: 1px solid #1b164e;
}

.gutter-row svg {
    width: 14px;
    height: 16px;
    margin-left: 3px;
}

.cells {
    border-collapse: collapse;
    table-layout: fixed;
    width: 277px;
}

.cells td {
    height: 44px;
    padding: 0;
    border: 1px solid #1a1a1a;
    text-align: center;
    vertical-align: top;
    line-height: 18px;
    white-space: nowrap;
}

.cells svg {
    width: 18px;
    height: 18px;
    margin: 0 auto;
}

.cells tr:first-child td {
    border-top: 0;
}

.current {
    background: #b6d8fa;
}

.field {
    background: #f0eef8;
}

.code {
    background: #9dfd98;
}

/* output preview */
.output {
    position: relative;
    display: flex;
    gap: 2px;
    height: 240px;
    margin-top: 2px;
    padding: 8px 7px 9px 8px;
}

.values {
    position: relative;
    flex: 0 0 50%;
    border: 1px solid #222;
}

.value-row {
    display: grid;
    grid-template-columns: 1fr 1fr;
    height: 23px;
    border: 1px solid #1b1830;
}

.value-row label {
    padding-left: 4px;
    background: #f0effa;
    color: #223;
    font-size: 11px;
    line-height: 21px;
}

.value-row input {
    height: 21px;
    border-left: 1px solid #1b1830;
    background: #fcfcfc;
    padding-bottom: 5px;
    min-width: 0;
}

.preview {
    flex: 1;
    min-width: 0;
    resize: none;
    overflow: hidden;
    padding: 3px 2px;
    border-top: 1px solid #666;
    border-left: 2px solid #777;
    border-bottom: 1px solid #ddd;
    background: #fafafa;
    font: 15px/17px "Liberation Mono", monospace;
}

.user-mark {
    position: absolute;
    color: #1a1a9c;
    white-space: nowrap;
}

.values .user-mark {
    left: 20px;
    bottom: -5px;
}

/* task bar */
.taskbar {
    position: relative;
    display: flex;
    height: 36px;
    border-top: 1px solid #26323a;
    background: linear-gradient(#8b9aa4, #74858f);
    color: #fff;
}

.launch {
    display: flex;
    align-items: center;
    justify-content: space-between;
    width: 182px;
    padding: 0 16px 0 9px;
}

.launch svg {
    width: 34px;
    height: 34px;
}

.task {
    display: flex;
    align-items: center;
    gap: 11px;
    width: 160px;
    padding-left: 10px;
    border-right: 1px solid #5c6a74;
    background: linear-gradient(160deg, #c3ccd2, #8f9ca5 35%, #74848e);
    text-align: left;
    white-space: nowrap;
}

.task svg {
    width: 24px;
    height: 32px;
}

.task.lit,
.task.bright,
.task.alert {
    width: 162px;
    gap: 5px;
    border-left: 2px solid #2e3a44;
}

.task.lit svg,
.task.bright svg,
.task.alert svg {
    width: 30px;
    height: 30px;
}

.task.bright {
    background: linear-gradient(160deg, #eef1f3, #b9c2c8 40%, #9ca8b0);
}

.task.alert {
    background: linear-gradient(#f4ee28, #f8c838 40%, #e08a28);
}

.tray {
    flex: 1;
    display: flex;
    align-items: center;
    justify-content: flex-end;
    gap: 8px;
    padding-top: 2px;
}

.tray svg {
    width: 16px;
    height: 16px;
}

.tray .keyboard {
    margin-right: 12px;
}

.tray .usb {
    margin-right: 6px;
}

.clock {
    display: flex;
    flex-direction: column;
    align-items: center;
    width: 80px;
    line-height: 17px;
}

.show-desktop {
    width: 10px;
    height: 35px;
    margin-left: -4px;
    border-left: 1px solid #45525c;
    background: #8b99a3;
}

.taskbar .user-mark {
    right: 0;
    bottom: 2px;
    color: #1010c0;
    font-size: 11px;
}

.cursor {
    position: absolute;
    width: 14px;
    height: 20px;
}

.cursor-tree {
    left: 433px;
    top: 318px;
}

.cursor-edge {
    right: -8px;
    top: -30px;
}
```
